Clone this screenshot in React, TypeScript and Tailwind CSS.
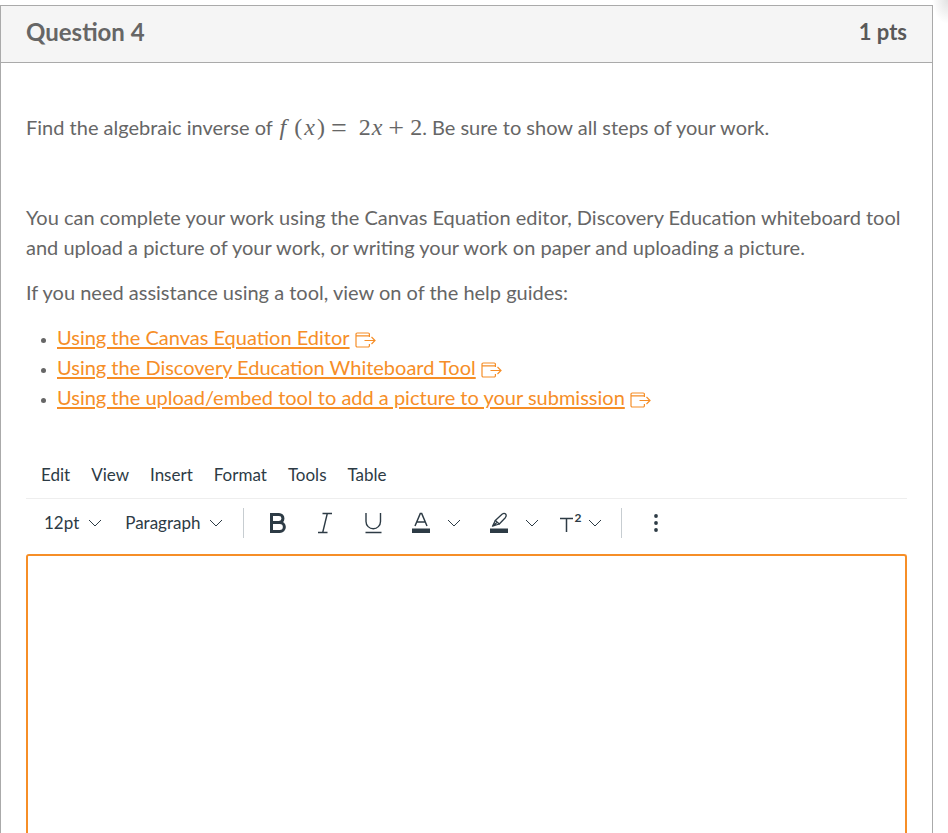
import type { ReactNode } from 'react'

const MENUS = ['Edit', 'View', 'Insert', 'Format', 'Tools', 'Table']

const GUIDES = [
  'Using the Canvas Equation Editor',
  'Using the Discovery Education Whiteboard Tool',
  'Using the upload/embed tool to add a picture to your submission',
]

function Chevron() {
  return (
    <svg width="14" height="14" viewBox="0 0 14 14" fill="none" stroke="currentColor" strokeWidth="1" aria-hidden="true">
      <path d="M1 4l6 6 6-6" />
    </svg>
  )
}

function ExternalIcon() {
  return (
    <svg className="ml-[5px] inline-block align-[-3px]" width="21" height="16" viewBox="0 0 21 16" fill="none" stroke="currentColor" strokeWidth="1.2" aria-hidden="true">
      <path d="M14.4 5V2.2A1.2 1.2 0 0 0 13.2 1H2.2A1.2 1.2 0 0 0 1 2.2v11.6A1.2 1.2 0 0 0 2.2 15h11a1.2 1.2 0 0 0 1.2-1.2V12" />
      <path d="M1 3.8h13.4M9.5 8.5H20M16.5 5l3.500 3.500-3.500 3.500" />
    </svg>
  )
}

function BoldIcon() {
  return (
    <svg width="20" height="22" viewBox="0 0 20 22" fill="none" stroke="currentColor" strokeWidth="3" aria-hidden="true">
      <path d="M3.5 2.5h7.5a3.900 3.900 0 0 1 0 7.900H3.500M3.500 10.400h8.300a4.500 4.500 0 0 1 0 9.100H3.500M3.500 1v20" />
    </svg>
  )
}

function ItalicIcon() {
  return (
    <svg width="20" height="22" viewBox="0 0 20 22" fill="none" stroke="currentColor" strokeWidth="1.4" aria-hidden="true">
      <path d="M6.5 1.5h9.5M2 20.5h9.5M11.3 1.5l-4.600 19" />
    </svg>
  )
}

function UnderlineIcon() {
  return (
    <svg width="20" height="22" viewBox="0 0 20 22" fill="none" stroke="currentColor" strokeWidth="1.4" aria-hidden="true">
      <path d="M2 1v8.500a7 7 0 0 0 14.500 0V1M1.500 20.500h16" />
    </svg>
  )
}

function TextColorIcon() {
  return (
    <svg width="20" height="22" viewBox="0 0 20 22" fill="none" stroke="currentColor" strokeWidth="1.5" aria-hidden="true">
      <path d="M4 14l5.300-12.500h1.400L16 14M5.800 10h8.400" />
      <path d="M1 16.500h18v4.500H1z" fill="currentColor" stroke="none" />
    </svg>
  )
}

function HighlightIcon() {
  return (
    <svg width="20" height="22" viewBox="0 0 20 22" fill="none" stroke="currentColor" strokeWidth="1.3" strokeLinejoin="round" aria-hidden="true">
      <path d="M6.300 8.500l6.700-6.300q2.200-1.500 3.600-.2 1.300 1.600-.3 3.700l-6 6.300z" />
      <path d="M6.300 8.500l-2.800 5.700 6.800-2.200M3.500 14.200l4.400-3.700" />
      <path d="M1 16.500h18v4.500H1z" fill="currentColor" stroke="none" />
    </svg>
  )
}

function SuperscriptIcon() {
  return (
    <span className="flex w-6 gap-px">
      <svg width="13" height="22" viewBox="0 0 13 22" fill="none" stroke="currentColor" strokeWidth="1.5" aria-hidden="true">
        <path d="M0 6.5h13M6.5 6.5V20" />
      </svg>
      <span className="text-xs leading-3 font-bold">2</span>
    </span>
  )
}

function ToolButton({ label, children }: { label: string; children: ReactNode }) {
  return (
    <button type="button" aria-label={label} className="flex h-8 items-center justify-center">
      {children}
    </button>
  )
}

function Formula() {
  return (
    <span className="font-['Liberation_Serif',serif] text-2xl leading-none">
      <i className="mr-2 ml-0.5">f</i>
      <span>(</span>
      <i className="mx-0.5">x</i>
      <span>)</span>
      <span className="mr-3 ml-1.5 align-[-2px] text-[28px] leading-none">=</span>
      <span>2</span>
      <i className="ml-px">x</i>
      <span className="mx-1.5 align-[-2px] text-[28px] leading-none">+</span>
      <span>2</span>
    </span>
  )
}

function Toolbar() {
  return (
    <div role="toolbar" className="flex h-[55px] items-center pb-2 pl-[18px]">
      <button type="button" className="flex items-center gap-[9px]">
        12pt <Chevron />
      </button>
      <button type="button" className="ml-[23px] flex items-center gap-[9px]">
        Paragraph <Chevron />
      </button>
      <span className="ml-5 h-[30px] w-px bg-[#c7cdd1]" />
      <div className="ml-6 flex items-center gap-7">
        <ToolButton label="Bold"><BoldIcon /></ToolButton>
        <ToolButton label="Italic"><ItalicIcon /></ToolButton>
        <ToolButton label="Underline"><UnderlineIcon /></ToolButton>
      </div>
      <div className="ml-[27px] flex items-center gap-4">
        <ToolButton label="Text color"><TextColorIcon /></ToolButton>
        <ToolButton label="Text color options"><Chevron /></ToolButton>
      </div>
      <div className="ml-7 flex items-center gap-4">
        <ToolButton label="Highlight color"><HighlightIcon /></ToolButton>
        <ToolButton label="Highlight color options"><Chevron /></ToolButton>
      </div>
      <div className="ml-[21px] flex items-center gap-1">
        <ToolButton label="Superscript"><SuperscriptIcon /></ToolButton>
        <ToolButton label="Superscript options"><Chevron /></ToolButton>
      </div>
      <span className="ml-[19px] h-[30px] w-px bg-[#c7cdd1]" />
      <div className="ml-6">
        <ToolButton label="More">
          <svg width="20" height="22" viewBox="0 0 20 22" fill="currentColor" aria-hidden="true">
            <circle cx="10" cy="4" r="1.9" />
            <circle cx="10" cy="11" r="1.9" />
            <circle cx="10" cy="18" r="1.9" />
          </svg>
        </ToolButton>
      </div>
    </div>
  )
}

export default function App() {
  return (
    <div className="relative flex min-h-screen flex-col overflow-hidden bg-white pt-[5px] pr-[15px] font-['Lato',sans-serif] text-xl leading-[30px] text-[#666666]">
      <div className="absolute top-0 right-0 h-6 w-4 bg-[radial-gradient(ellipse_at_top_right,#e2e2e2,transparent_70%)]" />
      <section className="flex flex-1 flex-col border border-b-0 border-[#aaaaaa]">
        <header className="flex h-[57px] items-center justify-between border-b border-[#aaaaaa] bg-[#f5f5f5] px-[25px] pb-1 font-bold">
          <h1 className="text-2xl">Question 4</h1>
          <span className="text-[22px] text-[#595959]">1 pts</span>
        </header>

        <div className="flex flex-1 flex-col px-[25px] pt-[49px]">
          <p className="h-[30px]">
            Find the algebraic inverse of <Formula />. Be sure to show all steps of your work.
          </p>
          <p className="mt-[60px]">
            You can complete your work using the Canvas Equation editor, Discovery Education whiteboard tool and upload a
            picture of your work, or writing your work on paper and uploading a picture.
          </p>
          <p className="mt-[15px]">If you need assistance using a tool, view on of the help guides:</p>
          <ul className="mt-[15px] list-disc pl-[31px]">
            {GUIDES.map((guide) => (
              <li key={guide} className="h-[30px] marker:text-sm">
                <a href="#" className="text-[#f68e27]">
                  <span className="underline decoration-2 underline-offset-2">{guide}</span>
                  <ExternalIcon />
                </a>
              </li>
            ))}
          </ul>

          <div className="mt-[46px] flex flex-1 flex-col text-[17px] text-[#2d3b45]">
            <div role="menubar" className="flex h-[41px] gap-[21px] border-b border-[#eeeeee] pl-[15px] leading-[34px]">
              {MENUS.map((menu) => (
                <button key={menu} type="button" role="menuitem" className="h-[34px]">{menu}</button>
              ))}
            </div>
            <Toolbar />
            <textarea
              aria-label="Rich text area"
              className="w-full flex-1 resize-none rounded-t-[3px] border-2 border-b-0 border-[#f68e27] p-3 outline-none"
            />
          </div>
        </div>
      </section>
    </div>
  )
}
